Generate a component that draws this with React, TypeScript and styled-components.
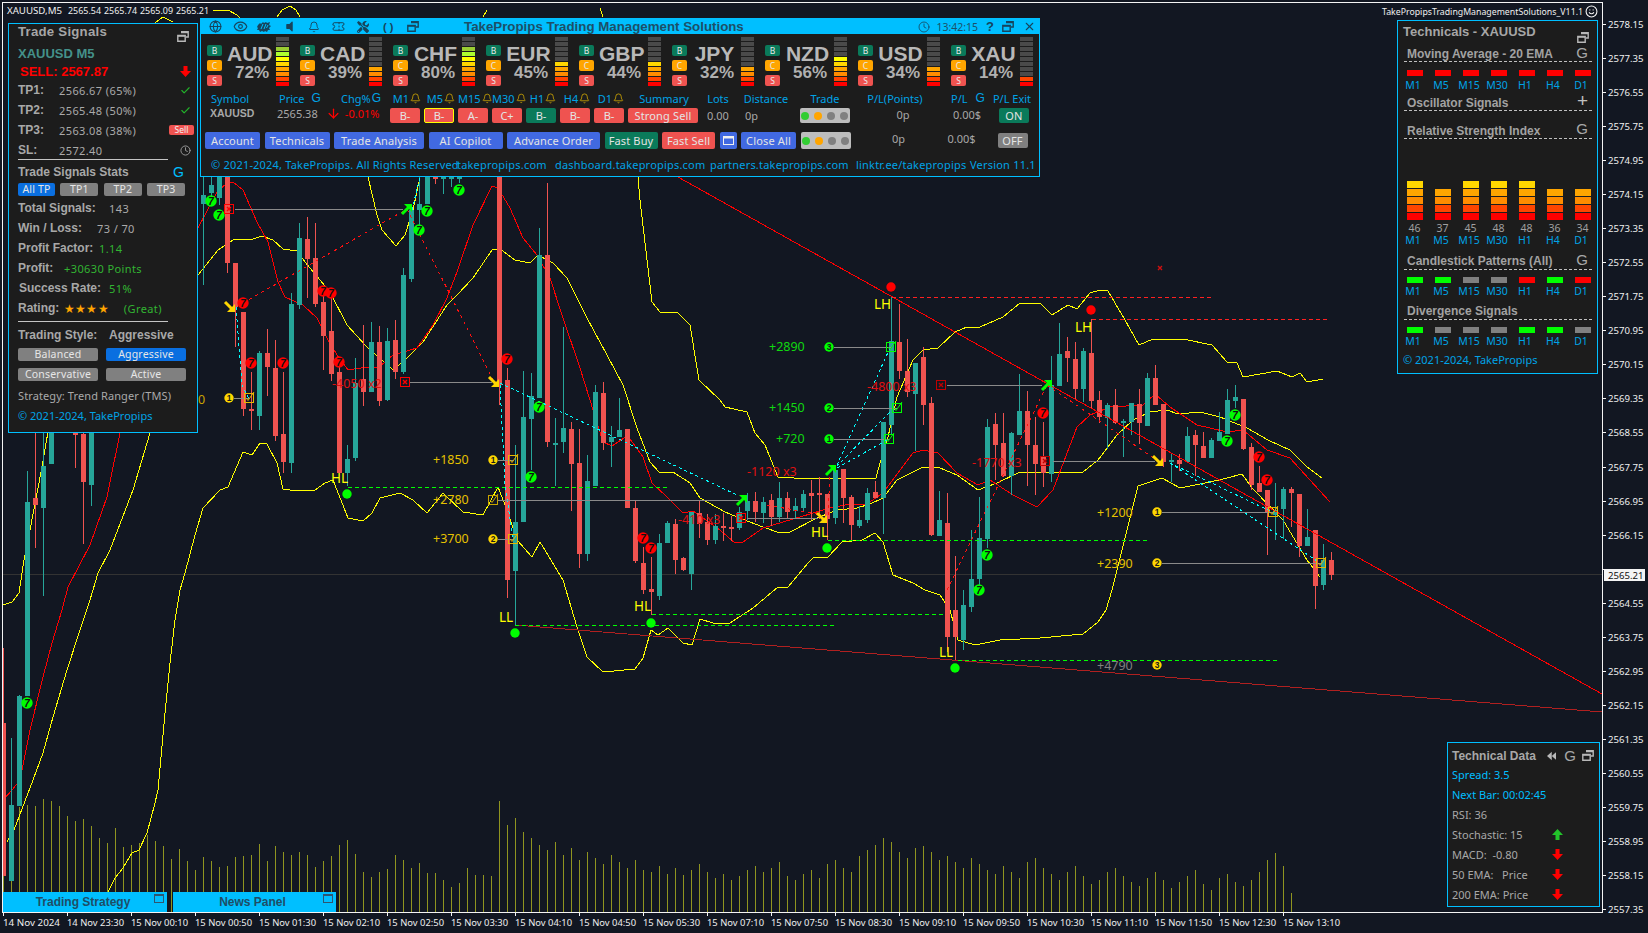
import React from "react";
import styled, { createGlobalStyle } from "styled-components";
import { Globe, Eye, Bell, Ticket, Clock, X, Check, Smile, ArrowDown } from "lucide-react";
import { FaTools, FaVolumeOff } from "react-icons/fa";

const Global = createGlobalStyle`
  html, body { margin: 0; padding: 0; background: #121722; }
  #root { width: 1648px; height: 933px; overflow: hidden; }
  * { box-sizing: border-box; }
`;

const BODY = `"Noto Sans", "Open Sans", sans-serif`;
const HEAD = `"Liberation Sans", Arial, sans-serif`;
const CYAN = "#00bfff";
const LINK = "#00a3e6";
const PANEL = "#1c1c1c";

/* ---------- page + chart ---------- */
const Page = styled.div`
  position: relative;
  width: 1648px;
  height: 933px;
  background: #121722;
  overflow: hidden;
`;
const ChartSvg = styled.svg`
  position: absolute;
  inset: 0;
`;
const AxisText = styled.text`
  font: 9.6px ${BODY};
  fill: #efefef;
`;
const TagText = styled.text`
  font: 9.6px ${BODY};
  fill: #101010;
`;
const TradeText = styled.text<{ $c: string }>`
  font: 12.5px ${BODY};
  fill: ${(p) => p.$c};
`;
const SwingText = styled.text`
  font: 13.5px ${BODY};
  fill: #ffff00;
`;
const MarkText = styled.text`
  font: italic bold 10px ${HEAD};
  fill: #101010;
  text-anchor: middle;
`;
const NumText = styled.text`
  font: bold 8.5px ${HEAD};
  fill: #1a1a1a;
  text-anchor: middle;
`;

type C = [number, number, number, number, number, "g" | "r"];
const candles: C[] = [
  [0, 648, 723, 876, 876, "r"], [1, 738, 805, 881, 881, "g"], [2, 695, 696, 806, 806, "g"], [3, 471, 502, 696, 696, "g"],
  [4, 432, 498, 505, 548, "r"], [5, 432, 466, 508, 596, "g"], [6, 432, 432, 464, 464, "g"], [9, 432, 433, 435, 468, "r"],
  [10, 432, 434, 482, 544, "r"], [11, 432, 432, 485, 506, "g"],
  [25, 170, 195, 204, 285, "g"], [26, 177, 185, 193, 205, "g"], [27, 177, 177, 198, 205, "g"], [28, 177, 177, 263, 273, "r"],
  [29, 263, 263, 307, 347, "r"], [30, 312, 312, 409, 416, "r"], [31, 372, 409, 411, 430, "r"], [32, 351, 353, 416, 430, "g"],
  [33, 329, 353, 367, 396, "r"], [34, 340, 368, 436, 441, "r"], [35, 372, 434, 462, 473, "r"], [36, 293, 304, 463, 473, "g"],
  [37, 223, 238, 305, 309, "g"], [38, 217, 239, 259, 298, "r"], [39, 223, 258, 304, 307, "r"], [40, 290, 302, 336, 370, "r"],
  [41, 288, 331, 374, 381, "r"], [42, 365, 372, 473, 473, "r"], [43, 445, 459, 473, 486, "g"], [44, 358, 383, 458, 461, "g"],
  [45, 325, 379, 392, 406, "r"], [46, 322, 342, 392, 392, "g"], [47, 326, 342, 401, 406, "r"], [48, 328, 341, 400, 401, "g"],
  [49, 320, 340, 372, 379, "r"], [50, 268, 275, 372, 374, "g"], [51, 205, 210, 279, 282, "g"], [52, 177, 204, 210, 232, "g"],
  [53, 177, 177, 204, 204, "g"], [54, 177, 177, 178, 184, "r"], [55, 177, 177, 178, 194, "g"], [56, 177, 177, 178, 187, "g"],
  [57, 177, 177, 178, 183, "g"], [62, 177, 177, 385, 405, "r"], [63, 368, 380, 580, 598, "r"], [64, 445, 522, 571, 625, "g"],
  [65, 371, 417, 522, 522, "g"], [66, 373, 396, 419, 470, "g"], [67, 228, 255, 398, 398, "g"], [68, 183, 255, 442, 447, "r"],
  [69, 418, 443, 444, 486, "g"], [70, 327, 428, 442, 453, "g"], [71, 422, 429, 464, 511, "r"], [72, 429, 463, 554, 568, "r"],
  [73, 455, 481, 554, 561, "g"], [74, 385, 392, 486, 486, "g"], [75, 382, 393, 443, 450, "r"], [76, 426, 437, 442, 467, "g"],
  [77, 398, 430, 437, 437, "g"], [78, 429, 429, 508, 508, "r"], [79, 501, 508, 561, 563, "r"], [80, 547, 563, 590, 594, "r"],
  [81, 557, 589, 592, 615, "r"], [82, 534, 543, 596, 600, "g"], [83, 521, 523, 543, 543, "g"], [84, 519, 524, 560, 574, "r"],
  [85, 557, 558, 570, 571, "r"], [86, 512, 512, 574, 590, "g"], [87, 500, 513, 524, 538, "r"], [88, 514, 522, 540, 545, "r"],
  [89, 514, 526, 540, 544, "g"], [90, 513, 526, 528, 541, "r"], [91, 516, 527, 528, 541, "r"], [92, 507, 512, 528, 530, "g"],
  [93, 493, 501, 511, 520, "g"], [94, 492, 501, 512, 522, "r"], [95, 497, 502, 513, 523, "g"], [96, 494, 500, 517, 526, "r"],
  [97, 482, 498, 517, 522, "g"], [98, 492, 498, 512, 518, "r"], [99, 498, 506, 511, 518, "g"], [100, 490, 494, 508, 512, "g"],
  [101, 480, 493, 496, 520, "r"], [102, 477, 493, 495, 519, "r"], [103, 494, 494, 519, 540, "r"], [104, 468, 470, 518, 524, "g"],
  [105, 469, 469, 498, 523, "r"], [106, 495, 497, 525, 541, "r"], [107, 506, 520, 526, 528, "g"], [108, 488, 493, 520, 523, "g"],
  [109, 481, 492, 498, 498, "r"], [110, 422, 422, 498, 534, "g"], [111, 296, 341, 425, 435, "g"], [112, 304, 342, 371, 379, "r"],
  [113, 339, 371, 392, 397, "r"], [114, 363, 363, 394, 451, "g"], [115, 347, 357, 405, 425, "r"], [116, 397, 403, 535, 536, "r"],
  [117, 491, 520, 536, 536, "g"], [118, 493, 523, 637, 652, "r"], [119, 556, 610, 637, 661, "r"], [120, 590, 605, 640, 650, "g"],
  [121, 530, 579, 607, 612, "g"], [122, 497, 538, 579, 590, "g"], [123, 419, 427, 539, 548, "g"], [124, 413, 424, 445, 480, "r"],
  [125, 413, 443, 476, 477, "r"], [126, 432, 433, 476, 495, "g"], [127, 374, 411, 435, 435, "g"], [128, 391, 411, 445, 486, "r"],
  [129, 417, 445, 464, 495, "r"], [130, 422, 457, 473, 487, "r"], [131, 356, 385, 474, 482, "g"], [132, 323, 354, 386, 386, "g"],
  [133, 337, 351, 358, 382, "r"], [134, 342, 359, 389, 399, "r"], [135, 348, 351, 389, 402, "g"], [136, 319, 353, 401, 409, "r"],
  [137, 391, 400, 417, 423, "r"], [138, 403, 405, 418, 449, "g"], [139, 389, 405, 423, 424, "r"], [140, 419, 421, 423, 457, "g"],
  [141, 403, 403, 422, 435, "g"], [142, 389, 404, 423, 444, "r"], [143, 373, 378, 426, 426, "g"], [144, 365, 378, 405, 405, "r"],
  [145, 404, 404, 462, 467, "r"], [146, 454, 460, 462, 482, "g"], [147, 454, 460, 464, 471, "r"], [148, 427, 436, 462, 462, "g"],
  [149, 430, 435, 445, 476, "r"], [150, 432, 446, 458, 458, "r"], [151, 438, 440, 458, 458, "g"], [152, 412, 432, 441, 441, "g"],
  [153, 389, 400, 434, 434, "g"], [154, 385, 397, 401, 408, "g"], [155, 399, 399, 449, 450, "r"], [156, 443, 447, 485, 490, "r"],
  [157, 466, 483, 492, 492, "r"], [158, 490, 490, 512, 555, "r"], [159, 483, 510, 515, 540, "g"], [160, 487, 489, 509, 539, "g"],
  [161, 487, 489, 493, 527, "r"], [162, 494, 494, 546, 557, "r"], [163, 509, 537, 546, 546, "g"], [164, 530, 530, 586, 609, "r"],
  [165, 544, 560, 585, 590, "g"], [166, 552, 560, 575, 580, "r"],
];

const volA = [780, 817, 807, 805, 806, 799, 801, 806, 816, 821, 819, 826, 838, 843, 828, 847, 845, 843, 835, 841, 846, 859, 849, 861, 870, 857, 861, 867, 866, 857, 856, 855, 844, 861, 846, 852, 855, 852, 855, 867, 861, 856, 845, 840, 854, 872, 877, 872, 869, 855, 860, 868, 863, 873, 873, 880, 887, 883, 868, 875, 875, 876, 801,
  825, 818, 832, 838, 845, 850, 842, 855, 848, 860, 852, 858, 864, 855, 862, 868, 860, 870, 872, 866, 874, 868, 875, 870, 864, 872, 878, 874, 880, 876, 870, 866, 872, 868, 862, 876, 880, 874, 870, 878, 864, 860, 868, 872, 856, 850, 845, 838, 842, 852, 858, 848, 846, 852, 860, 856, 862, 868, 858, 864, 870, 874, 866, 872, 878, 862, 858, 868, 874, 880, 872, 866, 876, 884, 880, 872, 868, 876, 882, 886, 878, 872, 880, 888, 882, 876, 870, 884, 890, 878, 874, 882, 886, 880, 872, 860, 853, 866, 893];

const upperA = [[3, 605], [12, 602], [19, 593], [24, 560], [30, 530], [42, 467], [50, 420]];
const upperB = [[368, 177], [377, 215], [382, 230], [396, 246], [405, 235], [413, 210], [420, 177]];
const upperC = [[638, 177], [640, 200], [652, 302], [660, 312], [677, 312], [690, 325], [699, 380], [720, 400], [725, 407], [747, 412], [755, 433], [765, 445], [778, 477], [810, 479], [845, 478], [876, 478], [880, 463], [888, 437], [897, 397], [913, 360], [923, 350], [938, 348], [955, 332], [967, 327], [980, 327], [1003, 317], [1020, 303], [1040, 303], [1052, 315], [1068, 305], [1077, 309], [1090, 293], [1100, 290], [1108, 291], [1125, 320], [1139, 345], [1153, 339], [1183, 339], [1212, 345], [1227, 362], [1237, 363], [1243, 377], [1277, 371], [1292, 377], [1300, 373], [1307, 382], [1323, 379]];
const topBits = [
  [[155, 23], [163, 17], [173, 22]], [[213, 11], [228, 10], [237, 15], [240, 18]], [[277, 17], [282, 10], [290, 6], [296, 10], [300, 17]], [[483, 17], [487, 10]], [[600, 8], [603, 17]],
];
const midA = [[7, 842], [14, 830], [33, 780], [43, 753], [53, 717], [67, 670], [80, 630], [90, 600], [98, 573], [110, 550], [133, 490], [150, 433], [160, 410]];
const midB = [[198, 275], [218, 250], [233, 240], [253, 239], [262, 236], [273, 240], [283, 249], [297, 251], [305, 262], [330, 292], [347, 325], [367, 347], [393, 370], [407, 358], [423, 342], [447, 305], [457, 295], [473, 278], [492, 250], [500, 249], [515, 260], [530, 263], [538, 255], [553, 263], [567, 278], [587, 318], [607, 355], [623, 385], [637, 428], [650, 462], [660, 473], [673, 472], [690, 483], [700, 498], [725, 512], [737, 517], [763, 527], [780, 533], [790, 532], [817, 518], [837, 510], [857, 508], [870, 504], [883, 498], [897, 480], [923, 467], [940, 468], [957, 475], [978, 490], [997, 483], [1020, 472], [1050, 472], [1067, 473], [1083, 472], [1098, 460], [1117, 435], [1133, 420], [1150, 412], [1167, 410], [1178, 414], [1200, 412], [1220, 417], [1247, 428], [1268, 440], [1290, 450], [1307, 467], [1322, 478]];
const lowerA = [[108, 892], [115, 878], [123, 868], [132, 853], [139, 850], [147, 833], [155, 803], [158, 790], [165, 713], [170, 663], [175, 620], [180, 590], [185, 573], [195, 535], [203, 508], [220, 490], [228, 487], [243, 452], [252, 455], [260, 443], [267, 444], [277, 463], [283, 489], [297, 491], [315, 490], [325, 483], [333, 480], [348, 518], [363, 521], [372, 513], [380, 498], [400, 493], [413, 500], [427, 513], [443, 493], [463, 512], [483, 515], [498, 487], [507, 510], [517, 540], [532, 557], [540, 542], [563, 580], [577, 627], [587, 657], [603, 672], [635, 669], [643, 658], [651, 630], [658, 635], [668, 628], [683, 643], [692, 645], [700, 619], [713, 623], [730, 623], [753, 608], [778, 587], [788, 587], [808, 563], [813, 558], [828, 557], [842, 542], [862, 540], [875, 533], [883, 542], [893, 575], [913, 583], [925, 590], [940, 595], [950, 610], [958, 640], [975, 645], [1000, 640], [1040, 638], [1083, 634], [1098, 622], [1106, 610], [1112, 590], [1138, 486], [1162, 478], [1180, 488], [1210, 482], [1227, 478], [1242, 474], [1252, 488], [1283, 520], [1307, 560], [1320, 577]];
const redA = [[3, 800], [12, 790], [20, 780], [30, 730], [43, 677], [52, 643], [62, 610], [68, 587], [90, 545], [107, 497], [120, 433], [126, 410]];
const redB = [[198, 228], [217, 192], [227, 183], [233, 182], [243, 190], [257, 222], [268, 242], [278, 282], [285, 297], [303, 305], [317, 318], [327, 338], [337, 355], [348, 370], [367, 367], [378, 368], [393, 355], [417, 348], [433, 325], [447, 298], [457, 272], [473, 225], [492, 186], [498, 188], [510, 208], [523, 238], [537, 255], [550, 278], [563, 318], [580, 368], [603, 442], [612, 446], [627, 436], [633, 443], [643, 457], [652, 483], [667, 497], [683, 513], [693, 511], [720, 530], [735, 543], [743, 542], [763, 528], [783, 522], [830, 508], [850, 504], [867, 504], [883, 493], [913, 453], [923, 450], [938, 453], [957, 473], [978, 485], [990, 480], [1013, 495], [1037, 507], [1053, 490], [1077, 427], [1090, 415], [1110, 407], [1143, 405], [1155, 394], [1170, 407], [1197, 425], [1227, 432], [1243, 430], [1267, 450], [1290, 458], [1310, 480], [1330, 502]];
const pts = (a: number[][]) => a.map((p) => p.join(",")).join(" ");

const seven: [number, number, string][] = [
  [27, 703, "#00ff00"], [211, 201, "#00ff00"], [219, 215, "#00ff00"], [427, 211, "#00ff00"], [419, 230, "#00ff00"], [459, 190, "#00ff00"], [539, 407, "#00ff00"], [531, 477, "#00ff00"], [987, 555, "#00ff00"], [979, 590, "#00ff00"], [1235, 415, "#00ff00"], [1227, 441, "#00ff00"],
  [243, 303, "#ff0000"], [251, 363, "#ff0000"], [283, 363, "#ff0000"], [323, 291, "#ff0000"], [331, 293, "#ff0000"], [339, 362, "#ff0000"], [507, 359, "#ff0000"], [643, 538, "#ff0000"], [651, 548, "#ff0000"], [1043, 413, "#ff0000"], [1259, 457, "#ff0000"], [1267, 480, "#ff0000"],
];
const Y = "#ffd700";
const G = "#00ff00";
const tps: [string, number, number, string, number, number, string, boolean][] = [
  ["+1850", 433, 460, "1", 493, 513, Y, true], ["+3700", 433, 539, "2", 493, 513, Y, true],
  ["+2890", 769, 347, "3", 829, 891, G, true], ["+1450", 769, 408, "2", 829, 897, G, true], ["+720", 776, 439, "1", 829, 889, G, true],
  ["+1200", 1097, 513, "1", 1157, 1273, Y, true], ["+2390", 1097, 564, "2", 1157, 1321, Y, true], ["", 160, 399, "1", 229, 249, Y, false],
];
const greyLines = [[235, 403, 209], [410, 492, 382], [498, 740, 500], [747, 818, 518], [947, 1042, 385], [1053, 1155, 461]];
const xBoxes: [number, number, string][] = [[229, 209, "#ff0000"], [405, 382, "#ff0000"], [741, 518, "#ff0000"], [941, 385, "#c00000"], [1045, 461, "#c00000"]];
const greenArrows = [[407, 209], [742, 500], [831, 470], [1047, 385]];
const yellowArrows = [[230, 307], [494, 382], [822, 518], [1158, 461]];
const times = ["14 Nov 2024", "14 Nov 23:30", "15 Nov 00:10", "15 Nov 00:50", "15 Nov 01:30", "15 Nov 02:10", "15 Nov 02:50", "15 Nov 03:30", "15 Nov 04:10", "15 Nov 04:50", "15 Nov 05:30", "15 Nov 07:10", "15 Nov 07:50", "15 Nov 08:30", "15 Nov 09:10", "15 Nov 09:50", "15 Nov 10:30", "15 Nov 11:10", "15 Nov 11:50", "15 Nov 12:30", "15 Nov 13:10"];

const Chart = () => (
  <ChartSvg width="1648" height="933" viewBox="0 0 1648 933">
    <g shapeRendering="crispEdges">
      <line x1="3" x2="1602" y1="574.5" y2="574.5" stroke="#333333" />
      {volA.map((y, i) => (
        <rect key={i} x={3 + 8 * i} y={y} width="1" height={912 - y} fill="#8f9420" />
      ))}
      {[upperA, upperB, upperC, midA, midB, lowerA, ...topBits].map((l, i) => (
        <polyline key={i} points={pts(l)} fill="none" stroke="#ffff00" strokeWidth="1" />
      ))}
      {[redA, redB].map((l, i) => (
        <polyline key={i} points={pts(l)} fill="none" stroke="#ff0000" strokeWidth="1" />
      ))}
      {candles.map(([n, h, t, b, l, c]) => {
        const col = c === "g" ? "#26a69a" : "#ef5350";
        return (
          <g key={n}>
            <rect x={3 + 8 * n} y={h} width="1" height={l - h} fill={col} />
            <rect x={n === 0 ? 3 : 1 + 8 * n} y={t} width={n === 0 ? 3 : 5} height={Math.max(b - t, 2)} fill={col} />
          </g>
        );
      })}
      <line x1="678" y1="177" x2="1602" y2="694" stroke="#ff0000" />
      <line x1="515" y1="625" x2="1602" y2="712" stroke="#b02020" />
      {[[348, 667, 487], [652, 946, 614], [515, 835, 625], [828, 1148, 540], [958, 1277, 660]].map(([a, b, y], i) => (
        <line key={i} x1={a} x2={b} y1={y + 0.5} y2={y + 0.5} stroke="#00ff00" strokeDasharray="4 3" />
      ))}
      {[[892, 1212, 297], [1092, 1328, 319]].map(([a, b, y], i) => (
        <line key={i} x1={a} x2={b} y1={y + 0.5} y2={y + 0.5} stroke="#ff2020" strokeDasharray="4 3" />
      ))}
      {[[[243, 303], [407, 209]], [[407, 209], [494, 382]], [[947, 590], [1047, 385]], [[1047, 385], [1158, 461]], [[830, 470], [828, 517]], [[767, 505], [822, 515]]].map((l, i) => (
        <polyline key={i} points={pts(l)} fill="none" stroke="#ff1010" strokeDasharray="3 4" />
      ))}
      {[[[236, 307], [242, 385], [249, 399]], [[500, 385], [505, 485], [513, 539]], [[500, 383], [737, 495]], [[837, 465], [890, 348]], [[837, 466], [892, 410]], [[837, 468], [887, 440]], [[1170, 463], [1272, 512]], [[1170, 463], [1320, 563]], [[412, 210], [420, 177]]].map((l, i) => (
        <polyline key={i} points={pts(l)} fill="none" stroke="#00ffff" strokeDasharray="3 3" />
      ))}
      {greyLines.map(([a, b, y], i) => (
        <line key={i} x1={a} x2={b} y1={y + 0.5} y2={y + 0.5} stroke="#8a8a8a" />
      ))}
      {tps.map(([, , y, , cx, bx], i) => (
        <line key={i} x1={cx + 5} x2={bx} y1={y + 0.5 - (i > 4 ? 1 : 0)} y2={y + 0.5 - (i > 4 ? 1 : 0)} stroke="#8a8a8a" />
      ))}
    </g>

    {[[891, 287, "#ff0000"], [1091, 310, "#ff0000"], [515, 633, G], [651, 623, G], [827, 548, G], [347, 494, G], [955, 668, G]].map(([x, y, c], i) => (
      <circle key={i} cx={x as number} cy={y as number} r="4.7" fill={c as string} />
    ))}
    {seven.map(([x, y, c], i) => (
      <g key={i}>
        <circle cx={x} cy={y} r="5.7" fill={c} />
        <MarkText x={x} y={y + 3.5}>7</MarkText>
      </g>
    ))}
    {tps.map(([label, tx, y, num, cx, bx, c, show], i) => {
      const d = i > 4 ? 1 : 0;
      const col = c === Y ? "#e6b800" : G;
      return (
        <g key={i}>
          {show && <TradeText $c={c === Y ? "#e6c200" : "#10d810"} x={tx} y={y + 4}>{label}</TradeText>}
          <circle cx={cx} cy={y - d} r="4.7" fill={c} />
          <NumText x={cx} y={y + 3 - d}>{num}</NumText>
          <rect x={bx - 4.5} y={y - 5 - d} width="9" height="9" fill="none" stroke={col} shapeRendering="crispEdges" />
          <polyline points={`${bx - 3},${y - d} ${bx - 1},${y + 2.5 - d} ${bx + 5},${y - 6 - d}`} fill="none" stroke={col} />
        </g>
      );
    })}
    <g>
      <rect x="488.5" y="495.5" width="9" height="9" fill="none" stroke="#c9a400" shapeRendering="crispEdges" />
      <polyline points="490,500 492,502.5 498,494" fill="none" stroke="#c9a400" />
      <TradeText $c="#e6c200" x="433" y="504">+2780</TradeText>
      <TradeText $c="#808080" x="1097" y="670">+4790</TradeText>
      <circle cx="1157" cy="665" r="4.7" fill={Y} />
      <NumText x="1157" y="668">3</NumText>
      <TradeText $c="#c9a400" x="198" y="404">0</TradeText>
    </g>
    {xBoxes.map(([x, y, c], i) => (
      <g key={i} stroke={c} fill="none">
        <rect x={x - 4.5} y={y - 4.5} width="9" height="9" shapeRendering="crispEdges" />
        <path d={`M${x - 2} ${y - 2}L${x + 2} ${y + 2}M${x + 2} ${y - 2}L${x - 2} ${y + 2}`} strokeWidth="1.4" />
      </g>
    ))}
    <path d="M1158 266L1162 270M1162 266L1158 270" stroke="#d01010" strokeWidth="1.4" />
    {greenArrows.map(([x, y], i) => (
      <g key={i} transform={`translate(${x} ${y})`}>
        <path d="M-5 5L2 -2" stroke={G} strokeWidth="3" />
        <polygon points="5,-5 -3,-5 5,3" fill={G} />
      </g>
    ))}
    {yellowArrows.map(([x, y], i) => (
      <g key={i} transform={`translate(${x} ${y})`}>
        <path d="M-5 -5L2 2" stroke={Y} strokeWidth="3" />
        <polygon points="5,5 -3,5 5,-3" fill={Y} />
      </g>
    ))}
    {[["-4050 x2", 332, 388], ["-1120 x3", 747, 476], ["-410 x3", 678, 524], ["-4800 x3", 867, 391], ["-1770 x3", 972, 467]].map(([t, x, y]) => (
      <TradeText key={t as string} $c="#e01010" x={x as number} y={y as number}>{t}</TradeText>
    ))}
    {[["LL", 499, 622], ["HL", 634, 611], ["HL", 811, 537], ["HL", 331, 483], ["LH", 874, 309], ["LH", 1075, 332], ["LL", 939, 657]].map(([t, x, y], i) => (
      <SwingText key={i} x={x as number} y={y as number}>{t}</SwingText>
    ))}

    <rect x="2.5" y="2.5" width="1600" height="910" fill="none" stroke="#f4f4f4" shapeRendering="crispEdges" />
    {Array.from({ length: 27 }).map((_, i) => {
      const y = Math.round(24 + i * 34.04);
      return (
        <g key={i}>
          <rect x="1603" y={y} width="3" height="1" fill="#f4f4f4" />
          {i !== 16 && <AxisText x="1608" y={y + 4}>{(2578.15 - i * 0.8).toFixed(2)}</AxisText>}
        </g>
      );
    })}
    {times.map((t, i) => (
      <g key={t}>
        <rect x={3 + 64 * i} y="913" width="1" height="3" fill="#f4f4f4" />
        <AxisText x={3 + 64 * i} y="926" textLength="57" lengthAdjust="spacingAndGlyphs">{t}</AxisText>
      </g>
    ))}
    <rect x="1604" y="569" width="41" height="12" fill="#f4f4f4" />
    <TagText x="1608" y="579">2565.21</TagText>

    <AxisText x="7" y="14" textLength="55" lengthAdjust="spacingAndGlyphs">XAUUSD,M5</AxisText>
    <AxisText x="68" y="14" textLength="33" lengthAdjust="spacingAndGlyphs">2565.54</AxisText>
    <AxisText x="104" y="14" textLength="33" lengthAdjust="spacingAndGlyphs">2565.74</AxisText>
    <AxisText x="140" y="14" textLength="33" lengthAdjust="spacingAndGlyphs">2565.09</AxisText>
    <AxisText x="176" y="14" textLength="33" lengthAdjust="spacingAndGlyphs">2565.21</AxisText>
    <AxisText x="1382" y="15" textLength="201" lengthAdjust="spacingAndGlyphs">TakePropipsTradingManagementSolutions_V11.1</AxisText>
  </ChartSvg>
);

/* ---------- shared panel bits ---------- */
const Window = styled.section<{ $x: number; $y: number; $w: number; $h: number }>`
  position: absolute;
  left: ${(p) => p.$x}px;
  top: ${(p) => p.$y}px;
  width: ${(p) => p.$w}px;
  height: ${(p) => p.$h}px;
  background: ${PANEL};
  border: 1px solid ${CYAN};
  color: #b0b0b0;
  font: 11px ${BODY};
  white-space: nowrap;
`;
const SmileSlot = styled.div`
  position: absolute;
  left: 1585px;
  top: 5px;
  color: #f4f4f4;
  display: flex;
`;
const WinIconSvg = styled.svg<{ $c?: string }>`
  display: block;
  flex: none;
  color: ${(p) => p.$c || "#b8b8b8"};
`;
const WinIcon = ({ c, s = 12 }: { c?: string; s?: number }) => (
  <WinIconSvg $c={c} width={s} height={s - 1} viewBox="0 0 12 11">
    <path d="M4 .8h7.2v5.2H9M.8 4.5H8.2v5.7H.8z" fill="none" stroke="currentColor" strokeWidth="1.4" />
    <path d="M4 1.5h7M1 5h7" stroke="currentColor" strokeWidth="1.6" />
  </WinIconSvg>
);
const DownIcon = ({ c = "#ff0000" }: { c?: string }) => (
  <svg width="11" height="11" viewBox="0 0 11 11"><polygon points="3.5,0 7.5,0 7.5,5 11,5 5.5,11 0,5 3.5,5" fill={c} /></svg>
);
const UpIcon = ({ c = "#22c32a" }: { c?: string }) => (
  <svg width="11" height="11" viewBox="0 0 11 11"><polygon points="3.5,11 7.5,11 7.5,6 11,6 5.5,0 0,6 3.5,6" fill={c} /></svg>
);
const GMark = styled.span<{ $c?: string; $size?: number; $ml?: number; $up?: number }>`
  font: ${(p) => p.$size || 15}px ${HEAD};
  color: ${(p) => p.$c || "#a8a8a8"};
  line-height: 1;
  margin-left: ${(p) => p.$ml || 0}px;
  margin-bottom: ${(p) => p.$up || 0}px;
`;

/* ---------- left panel ---------- */
const Line = styled.div<{ $mt?: number; $h?: number }>`
  display: flex;
  align-items: center;
  margin-top: ${(p) => p.$mt || 0}px;
  height: ${(p) => p.$h || 16}px;
  flex: none;
`;
const LeftInner = styled.div`
  padding: 0 3px 0 9px;
  display: flex;
  flex-direction: column;
`;
const TitleText = styled.span`
  font: bold 13.2px ${HEAD};
  letter-spacing: 0.25px;
  color: #a6a6a6;
  flex: 1;
`;
const LeftWin = styled.span`
  margin: 11px 5px 0 0;
`;
const SymbolTitle = styled.span`
  font: bold 13px ${HEAD};
  color: #44918a;
`;
const SellText = styled.span`
  margin-left: 2px;
  font: bold 13px ${HEAD};
  color: #ff0000;
`;
const Label = styled.span<{ $w?: number; $ml?: number }>`
  font: bold 12px ${HEAD};
  color: #a8a8a8;
  width: ${(p) => (p.$w ? `${p.$w}px` : "auto")};
  margin-left: ${(p) => p.$ml || 0}px;
  flex: none;
`;
const Val = styled.span<{ $c?: string; $ml?: number }>`
  font: 11px ${BODY};
  letter-spacing: 0.4px;
  color: ${(p) => p.$c || "#aaaaaa"};
  margin-left: ${(p) => p.$ml || 0}px;
  flex: none;
`;
const StrategyLine = styled.span`
  font: 11px ${BODY};
  letter-spacing: 0.1px;
  color: #aaaaaa;
`;
const RightSlot = styled.span<{ $pr?: number }>`
  margin-left: auto;
  padding-right: ${(p) => p.$pr ?? 3}px;
  display: flex;
  align-items: center;
`;
const SellTag = styled.span`
  width: 25px;
  height: 10px;
  border-radius: 2px;
  background: #ef5350;
  color: #f0f0f0;
  font: 8.5px/10px ${BODY};
  text-align: center;
`;
const Divider = styled.div<{ $mt: number }>`
  margin-top: ${(p) => p.$mt}px;
  width: 150px;
  height: 1px;
  background: #c4c4c4;
  flex: none;
`;
const TpGrid = styled.div`
  margin-top: 3px;
  display: grid;
  grid-template-columns: 37px 38px 38px 38px;
  column-gap: 5.4px;
  height: 13px;
  flex: none;
`;
const StyleGrid = styled.div<{ $mt: number }>`
  margin-top: ${(p) => p.$mt}px;
  display: grid;
  grid-template-columns: 80px 80px;
  column-gap: 8px;
  height: 13px;
  flex: none;
`;
const Pill = styled.span<{ $on?: boolean }>`
  background: ${(p) => (p.$on ? "#0a6fe0" : "#808080")};
  color: #e6e6e6;
  border-radius: 2px;
  font: 10.5px/13px ${BODY};
  letter-spacing: 0.2px;
  text-align: center;
`;
const Stars = styled.span`
  margin-left: 4px;
  color: #ffa500;
  font: 11.5px ${BODY};
  letter-spacing: 0.2px;
`;
const Copy = styled.span`
  font: 11px ${BODY};
  color: ${LINK};
`;

const LeftPanel = () => (
  <Window $x={8} $y={23} $w={190} $h={410}>
    <LeftInner>
      <Line $h={14}><TitleText>Trade Signals</TitleText><LeftWin><WinIcon /></LeftWin></Line>
      <Line $mt={7}><SymbolTitle>XAUUSD M5</SymbolTitle></Line>
      <Line $mt={2}><SellText>SELL: 2567.87</SellText><RightSlot><DownIcon /></RightSlot></Line>
      <Line $mt={3}><Label $w={41}>TP1:</Label><Val>2566.67 (65%)</Val><RightSlot><Check size={11} color="#22b32a" strokeWidth={2.4} /></RightSlot></Line>
      <Line $mt={4}><Label $w={41}>TP2:</Label><Val>2565.48 (50%)</Val><RightSlot><Check size={11} color="#22b32a" strokeWidth={2.4} /></RightSlot></Line>
      <Line $mt={4}><Label $w={41}>TP3:</Label><Val>2563.08 (38%)</Val><RightSlot $pr={0}><SellTag>Sell</SellTag></RightSlot></Line>
      <Line $mt={4}><Label $w={41}>SL:</Label><Val>2572.40</Val><RightSlot><Clock size={11} color="#a0a0a0" /></RightSlot></Line>
      <Divider $mt={1} />
      <Line $mt={4}><Label>Trade Signals Stats</Label><RightSlot $pr={10}><GMark $c={CYAN} $size={14}>G</GMark></RightSlot></Line>
      <TpGrid><Pill $on>All TP</Pill><Pill>TP1</Pill><Pill>TP2</Pill><Pill>TP3</Pill></TpGrid>
      <Line $mt={4}><Label $w={91}>Total Signals:</Label><Val>143</Val></Line>
      <Line $mt={4}><Label $w={79}>Win / Loss:</Label><Val>73 / 70</Val></Line>
      <Line $mt={4}><Label $w={81}>Profit Factor:</Label><Val $c="#32b432">1.14</Val></Line>
      <Line $mt={4}><Label $w={46}>Profit:</Label><Val $c="#32b432">+30630 Points</Val></Line>
      <Line $mt={4}><Label $w={90} $ml={1}>Success Rate:</Label><Val $c="#32b432">51%</Val></Line>
      <Line $mt={4}><Label $w={42}>Rating:</Label><Stars>★★★★</Stars><Val $c="#32b432" $ml={15}>(Great)</Val></Line>
      <Divider $mt={5} />
      <Line $mt={5}><Label $w={91}>Trading Style:</Label><Label>Aggressive</Label></Line>
      <StyleGrid $mt={5}><Pill>Balanced</Pill><Pill $on>Aggressive</Pill></StyleGrid>
      <StyleGrid $mt={7}><Pill>Conservative</Pill><Pill>Active</Pill></StyleGrid>
      <Line $mt={6}><StrategyLine>Strategy: Trend Ranger (TMS)</StrategyLine></Line>
      <Line $mt={4}><Copy>© 2021-2024, TakePropips</Copy></Line>
    </LeftInner>
  </Window>
);

/* ---------- top panel ---------- */
const TitleBar = styled.header`
  height: 15px;
  background: ${CYAN};
  display: flex;
  align-items: center;
  color: #17445c;
`;
const ToolIcons = styled.div`
  display: grid;
  grid-template-columns: repeat(9, 24.7px);
  padding-left: 2px;
  width: 224px;
  flex: none;
`;
const ToolIcon = styled.span`
  display: flex;
  justify-content: center;
  align-items: center;
  height: 15px;
  font: bold 11px ${HEAD};
`;
const BarTitle = styled.span`
  margin-left: 39px;
  font: bold 13.3px ${HEAD};
  color: #1d4f68;
`;
const BarRight = styled.div`
  margin-left: auto;
  display: flex;
  align-items: center;
  padding-right: 3px;
`;
const BarClock = styled.span`
  font: 10.5px ${BODY};
  margin: 0 8px 0 6px;
  color: #1d4f68;
`;
const BarHelp = styled.span`
  font: bold 13px ${HEAD};
  margin-right: 8px;
`;
const BarClose = styled.span`
  margin-left: 9px;
  display: flex;
`;
const CurrencyRow = styled.div`
  display: flex;
  margin-top: 3px;
  padding-left: 6px;
`;
const Block = styled.div`
  width: 93px;
  display: flex;
  flex: none;
`;
const Badges = styled.div`
  width: 15px;
  margin: 8px 5px 0 0;
  display: flex;
  flex-direction: column;
  gap: 4px;
`;
const Badge = styled.span<{ $bg: string }>`
  height: 11px;
  border-radius: 2px;
  background: ${(p) => p.$bg};
  color: #e8e8e8;
  font: 8.5px/11px ${BODY};
  text-align: center;
`;
const CurText = styled.div`
  width: 49px;
  padding-top: 6px;
  text-align: center;
`;
const CurName = styled.div`
  font: bold 21px/22px ${HEAD};
  color: #b8b8b8;
  margin-right: 4px;
`;
const CurPct = styled.div`
  font: bold 17px/16px ${HEAD};
  color: #b0b0b0;
  margin-left: 1px;
`;
const Meter = styled.div`
  width: 13px;
  display: flex;
  flex-direction: column-reverse;
  gap: 1px;
  height: 49px;
  flex: none;
`;
const MeterBar = styled.span<{ $c: string }>`
  height: 4px;
  background: ${(p) => p.$c};
`;
const CellRow = styled.div<{ $mt: number; $h: number; $pl?: number }>`
  display: flex;
  align-items: center;
  margin-top: ${(p) => p.$mt}px;
  height: ${(p) => p.$h}px;
  padding-left: ${(p) => p.$pl ?? 6}px;
`;
const Cell = styled.span<{ $w: number; $j?: string; $pl?: number; $pb?: number; $c?: string; $b?: boolean }>`
  width: ${(p) => p.$w}px;
  flex: none;
  display: flex;
  align-items: center;
  justify-content: ${(p) => p.$j || "center"};
  padding-left: ${(p) => p.$pl || 0}px;
  padding-bottom: ${(p) => p.$pb || 0}px;
  color: ${(p) => p.$c || "#a8a8a8"};
  font: ${(p) => (p.$b ? `bold 10.5px ${HEAD}` : `11px ${BODY}`)};
  gap: 1px;
`;
const HeadCell = styled(Cell)`
  color: ${LINK};
`;
const Grade = styled.span<{ $bg: string; $hl?: boolean }>`
  width: 30px;
  height: 15px;
  background: ${(p) => p.$bg};
  border: ${(p) => (p.$hl ? "1px solid #ffff00" : "none")};
  border-radius: 2px;
  color: #e4e4e4;
  font: 11px/15px ${BODY};
  text-align: center;
  line-height: ${(p) => (p.$hl ? 13 : 15)}px;
`;
const FillBtn = styled.span<{ $bg: string; $w: number; $h?: number }>`
  width: ${(p) => p.$w}px;
  height: ${(p) => p.$h || 17}px;
  flex: none;
  background: ${(p) => p.$bg};
  border-radius: 2px;
  color: #e4e4e4;
  font: 11px ${BODY};
  letter-spacing: 0.15px;
  display: flex;
  align-items: center;
  justify-content: center;
`;
const BtnRow = styled.div`
  display: flex;
  align-items: center;
  gap: 4.5px;
  margin-top: 9px;
  height: 17px;
  padding-left: 4px;
`;
const Toggle = styled.span<{ $h: number }>`
  width: 50px;
  height: ${(p) => p.$h}px;
  background: #bdbdbd;
  border-radius: 2px;
  display: flex;
  align-items: center;
  gap: 5px;
  padding-left: 1px;
  flex: none;
`;
const Dot = styled.i<{ $c: string }>`
  width: 8px;
  height: 8px;
  border-radius: 50%;
  background: ${(p) => p.$c};
`;
const Footer = styled.div`
  display: flex;
  margin-top: 8px;
  padding-left: 10px;
  height: 14px;
  align-items: center;
`;
const FootLink = styled.span<{ $w: number }>`
  width: ${(p) => p.$w}px;
  flex: none;
  color: ${LINK};
  font: 11px ${BODY};
  letter-spacing: 0.2px;
`;
const BurstIcon = () => (
  <svg width="15" height="12" viewBox="0 0 15 12">
    <path d="M1 4l2-2 1 1 2-2 1 1 2-1 1 1 3-1-1 3 2 1-2 2 1 2-2 0-1 2-2-1-1 1-2-1-2 1-1-2-2 0 1-2-1-1z" fill="#17445c" />
    <path d="M6 3L4 8M9 3L7 8M11 4L9.5 7" stroke="#00bfff" strokeWidth="1" />
  </svg>
);
const toggle = (h: number) => (
  <Toggle $h={h}><Dot $c="#32cd32" /><Dot $c="#ffa500" /><Dot $c="#808080" /><Dot $c="#808080" /></Toggle>
);
const levels = ["#ff0000", "#ff4500", "#ff8c00", "#ffa500", "#ffd700", "#ffff00", "#adff2f", "#9acd32"];
const curs: [string, number][] = [["AUD", 72], ["CAD", 39], ["CHF", 80], ["EUR", 45], ["GBP", 44], ["JPY", 32], ["NZD", 56], ["USD", 34], ["XAU", 14]];
const grades: [string, string, boolean][] = [["B-", "#ef5350", false], ["B-", "#ef5350", true], ["A-", "#ef5350", false], ["C+", "#ef5350", false], ["B-", "#0a7a5a", false], ["B-", "#ef5350", false], ["B-", "#ef5350", false]];
const RB = "#4169e1";
const GB = "#0a7a5a";
const RD = "#ef5350";

const TopPanel = () => (
  <Window $x={200} $y={18} $w={840} $h={159}>
    <TitleBar>
      <ToolIcons>
        <ToolIcon><Globe size={13} strokeWidth={2} /></ToolIcon>
        <ToolIcon><Eye size={15} strokeWidth={1.8} /></ToolIcon>
        <ToolIcon><BurstIcon /></ToolIcon>
        <ToolIcon><FaVolumeOff size={13} /></ToolIcon>
        <ToolIcon><Bell size={12} strokeWidth={1.8} /></ToolIcon>
        <ToolIcon><Ticket size={13} strokeWidth={1.8} /></ToolIcon>
        <ToolIcon><FaTools size={12} /></ToolIcon>
        <ToolIcon>( )</ToolIcon>
        <ToolIcon><WinIcon c="#17445c" /></ToolIcon>
      </ToolIcons>
      <BarTitle>TakePropips Trading Management Solutions</BarTitle>
      <BarRight>
        <Clock size={12} strokeWidth={1.6} />
        <BarClock>13:42:15</BarClock>
        <BarHelp>?</BarHelp>
        <WinIcon c="#17445c" />
        <BarClose><X size={13} strokeWidth={2} /></BarClose>
      </BarRight>
    </TitleBar>
    <CurrencyRow>
      {curs.map(([n, p]) => {
        const lit = Math.ceil(p / 10);
        return (
          <Block key={n}>
            <Badges>
              <Badge $bg={GB}>B</Badge>
              <Badge $bg="#ffa500">C</Badge>
              <Badge $bg={RD}>S</Badge>
            </Badges>
            <CurText>
              <CurName>{n}</CurName>
              <CurPct>{p}%</CurPct>
            </CurText>
            <Meter>
              {Array.from({ length: 10 }).map((_, i) => (
                <MeterBar key={i} $c={i < lit ? levels[i] : "#4a4a4a"} />
              ))}
            </Meter>
          </Block>
        );
      })}
    </CurrencyRow>
    <CellRow $mt={6} $h={12}>
      <HeadCell $w={68} $j="flex-start" $pl={4}>Symbol</HeadCell>
      <HeadCell $w={50} $j="flex-start" $pl={4}>Price<GMark $c={LINK} $size={12} $ml={6}>G</GMark></HeadCell>
      <HeadCell $w={65} $j="flex-start" $pl={16}>Chg%<GMark $c={LINK} $size={12}>G</GMark></HeadCell>
      {["M1", "M5", "M15", "M30", "H1", "H4", "D1"].map((t) => (
        <HeadCell key={t} $w={34}>{t}<Bell size={11} color="#e6b800" strokeWidth={1.6} /></HeadCell>
      ))}
      <HeadCell $w={72}>Summary</HeadCell>
      <HeadCell $w={36}>Lots</HeadCell>
      <HeadCell $w={60}>Distance</HeadCell>
      <HeadCell $w={58}>Trade</HeadCell>
      <HeadCell $w={82}>P/L(Points)</HeadCell>
      <HeadCell $w={58} $pl={6}>P/L<GMark $c={LINK} $size={12} $ml={7}>G</GMark></HeadCell>
      <HeadCell $w={36}>P/L Exit</HeadCell>
    </CellRow>
    <CellRow $mt={4} $h={15}>
      <Cell $w={68} $j="flex-start" $pl={3} $pb={5} $b>XAUUSD</Cell>
      <Cell $w={50} $j="flex-start" $pl={2} $pb={5}>2565.38</Cell>
      <Cell $w={65} $j="flex-start" $pl={1} $pb={5} $c="#ff0000"><ArrowDown size={15} color="#ff0000" strokeWidth={2} />&nbsp;-0.01%</Cell>
      {grades.map(([g, bg, hl], i) => (
        <Cell key={i} $w={34} $j="flex-start"><Grade $bg={bg} $hl={hl}>{g}</Grade></Cell>
      ))}
      <Cell $w={72} $j="flex-start"><FillBtn $bg={RD} $w={70} $h={15}>Strong Sell</FillBtn></Cell>
      <Cell $w={36}>0.00</Cell>
      <Cell $w={60} $j="flex-start" $pl={9}>0p</Cell>
      <Cell $w={58}>{toggle(15)}</Cell>
      <Cell $w={98} $pb={3}>0p</Cell>
      <Cell $w={30} $pb={3}>0.00$</Cell>
      <Cell $w={17} />
      <FillBtn $bg={GB} $w={30} $h={15}>ON</FillBtn>
    </CellRow>
    <BtnRow>
      <FillBtn $bg={RB} $w={55}>Account</FillBtn>
      <FillBtn $bg={RB} $w={65}>Technicals</FillBtn>
      <FillBtn $bg={RB} $w={90}>Trade Analysis</FillBtn>
      <FillBtn $bg={RB} $w={74}>AI Copilot</FillBtn>
      <FillBtn $bg={RB} $w={93}>Advance Order</FillBtn>
      <FillBtn $bg={GB} $w={53}>Fast Buy</FillBtn>
      <FillBtn $bg={RD} $w={53}>Fast Sell</FillBtn>
      <FillBtn $bg={RB} $w={17}><svg width="11" height="9" viewBox="0 0 11 9"><rect x=".5" y=".5" width="10" height="8" fill="none" stroke="#f0f0f0" /><rect x=".5" y=".5" width="10" height="2" fill="#f0f0f0" /></svg></FillBtn>
      <FillBtn $bg={RB} $w={55}>Close All</FillBtn>
      {toggle(17)}
      <Cell $w={87} $pb={4}>0p</Cell>
      <Cell $w={30} $pb={4}>0.00$</Cell>
      <Cell $w={12} />
      <FillBtn $bg="#808080" $w={30} $h={15}>OFF</FillBtn>
    </BtnRow>
    <Footer>
      <FootLink $w={246}>© 2021-2024, TakePropips. All Rights Reserved</FootLink>
      <FootLink $w={98}>takepropips.com</FootLink>
      <FootLink $w={155}>dashboard.takepropips.com</FootLink>
      <FootLink $w={146}>partners.takepropips.com</FootLink>
      <FootLink $w={114}>linktr.ee/takepropips</FootLink>
      <FootLink $w={66}>Version 11.1</FootLink>
    </Footer>
  </Window>
);

/* ---------- technicals panel ---------- */
const TechTitle = styled.div`
  margin: 3px 0 0 5px;
  height: 14px;
  display: flex;
  align-items: center;
  font: bold 13px ${HEAD};
  color: #a6a6a6;
`;
const TechWin = styled.span`
  margin-left: auto;
  padding: 12px 8px 0 0;
`;
const SecHead = styled.div<{ $mt: number; $h?: number }>`
  margin: ${(p) => p.$mt}px 0 0 6px;
  width: 188px;
  height: ${(p) => p.$h || 15}px;
  padding: 0 4px 0 3px;
  display: flex;
  align-items: center;
  justify-content: space-between;
  border-bottom: 1px dashed #c0c0c0;
  font: bold 12px ${HEAD};
  color: #a2a2a2;
`;
const TfGrid = styled.div<{ $mt?: number; $h: number; $end?: boolean }>`
  margin: ${(p) => p.$mt || 0}px 0 0 3px;
  height: ${(p) => p.$h}px;
  display: grid;
  grid-template-columns: repeat(7, 28px);
  align-items: ${(p) => (p.$end ? "end" : "center")};
  justify-items: center;
`;
const SigBar = styled.span<{ $c: string }>`
  width: 16px;
  height: 6px;
  background: ${(p) => p.$c};
`;
const TfLabel = styled.span`
  font: 10.5px ${BODY};
  color: ${LINK};
  padding-right: 4px;
`;
const TfValue = styled.span`
  font: 10.5px ${BODY};
  color: #a0a0a0;
  padding-right: 1px;
`;
const Stack = styled.div`
  width: 16px;
  display: flex;
  flex-direction: column;
  gap: 1px;
`;
const StackCell = styled.span<{ $c: string }>`
  height: 7px;
  background: ${(p) => p.$c};
`;
const TechCopy = styled.div`
  margin: 5px 0 0 5px;
  height: 14px;
  font: 11px/14px ${BODY};
  color: ${LINK};
`;
const R = "#ff0000";
const L = "#00ff00";
const N = "#808080";
const tf = ["M1", "M5", "M15", "M30", "H1", "H4", "D1"];
const Labels = ({ mt }: { mt: number }) => (
  <TfGrid $mt={mt} $h={14}>{tf.map((t) => <TfLabel key={t}>{t}</TfLabel>)}</TfGrid>
);
const Bars = ({ mt, c }: { mt: number; c: string[] }) => (
  <TfGrid $mt={mt} $h={6}>{c.map((x, i) => <SigBar key={i} $c={x} />)}</TfGrid>
);
const stackColors = ["#ffd700", "#ffa500", "#ff8c00", "#ff4500", "#ff0000"];
const rsi = [46, 37, 45, 48, 48, 36, 34];

const TechPanel = () => (
  <Window $x={1397} $y={20} $w={201} $h={354}>
    <TechTitle>Technicals - XAUUSD<TechWin><WinIcon /></TechWin></TechTitle>
    <SecHead $mt={9}>Moving Average - 20 EMA<GMark $up={4}>G</GMark></SecHead>
    <Bars mt={8} c={[R, R, R, R, R, R, R]} />
    <Labels mt={2} />
    <SecHead $mt={4}>Oscillator Signals<GMark $size={19} $up={5} $c="#c0c0c0">+</GMark></SecHead>
    <SecHead $mt={12} $h={16}>Relative Strength Index<GMark $up={4}>G</GMark></SecHead>
    <TfGrid $mt={42} $h={39} $end>
      {rsi.map((v, i) => (
        <Stack key={i}>
          {stackColors.slice(v >= 45 ? 0 : 1).map((c) => <StackCell key={c} $c={c} />)}
        </Stack>
      ))}
    </TfGrid>
    <TfGrid $mt={1} $h={12}>{rsi.map((v, i) => <TfValue key={i}>{v}</TfValue>)}</TfGrid>
    <Labels mt={0} />
    <SecHead $mt={6} $h={17}>Candlestick Patterns (All)<GMark $up={4}>G</GMark></SecHead>
    <Bars mt={7} c={[L, L, N, N, R, L, R]} />
    <Labels mt={1} />
    <SecHead $mt={5} $h={17}>Divergence Signals</SecHead>
    <Bars mt={7} c={[L, N, N, N, L, L, N]} />
    <Labels mt={1} />
    <TechCopy>© 2021-2024, TakePropips</TechCopy>
  </Window>
);

/* ---------- data panel ---------- */
const DataInner = styled.div`
  padding: 4px 5px 0 4px;
`;
const DataHead = styled.div`
  height: 17px;
  display: flex;
  align-items: center;
  font: bold 12px ${HEAD};
  color: #a8a8a8;
  & > svg:first-of-type {
    margin-left: 11px;
  }
`;
const DataG = styled.span`
  margin: 0 6px 0 8px;
  display: flex;
`;
const DataRow = styled.div<{ $c?: string }>`
  position: relative;
  height: 20px;
  display: flex;
  align-items: center;
  font: 11px ${BODY};
  color: ${(p) => p.$c || "#a8a8a8"};
`;
const DataIcon = styled.span`
  position: absolute;
  left: 100px;
  top: 5px;
  display: flex;
`;
const DataPanel = () => (
  <Window $x={1447} $y={742} $w={153} $h={165}>
    <DataInner>
      <DataHead>
        Technical Data
        <svg width="11" height="10" viewBox="0 0 11 10"><polygon points="5.5,0 5.5,10 0,5" fill="#b8b8b8" /><polygon points="11,0 11,10 5.5,5" fill="#b8b8b8" /></svg>
        <DataG><GMark>G</GMark></DataG>
        <WinIcon />
      </DataHead>
      <DataRow $c={CYAN}>Spread: 3.5</DataRow>
      <DataRow $c={CYAN}>Next Bar: 00:02:45</DataRow>
      <DataRow>RSI: 36</DataRow>
      <DataRow>Stochastic: 15<DataIcon><UpIcon /></DataIcon></DataRow>
      <DataRow>MACD:&nbsp; -0.80<DataIcon><DownIcon /></DataIcon></DataRow>
      <DataRow>50 EMA: &nbsp; Price<DataIcon><DownIcon /></DataIcon></DataRow>
      <DataRow>200 EMA: Price<DataIcon><DownIcon /></DataIcon></DataRow>
    </DataInner>
  </Window>
);

/* ---------- bottom tabs ---------- */
const TabDock = styled.div`
  position: absolute;
  left: 3px;
  top: 892px;
  display: flex;
  gap: 6px;
`;
const Tab = styled.div<{ $w: number }>`
  position: relative;
  width: ${(p) => p.$w}px;
  height: 20px;
  background: ${CYAN};
  display: flex;
  align-items: center;
  justify-content: center;
  padding-right: 4px;
  font: bold 12px ${HEAD};
  color: #1f4d66;
`;
const TabIcon = styled.span`
  position: absolute;
  right: 3px;
  top: 2px;
  width: 10px;
  height: 9px;
  border: 1px solid #2f5570;
  border-top-width: 2px;
`;

export default function App() {
  return (
    <Page>
      <Global />
      <Chart />
      <LeftPanel />
      <TopPanel />
      <TechPanel />
      <DataPanel />
      <SmileSlot><Smile size={13} /></SmileSlot>
      <TabDock>
        <Tab $w={164}>Trading Strategy<TabIcon /></Tab>
        <Tab $w={163}>News Panel<TabIcon /></Tab>
      </TabDock>
    </Page>
  );
}
